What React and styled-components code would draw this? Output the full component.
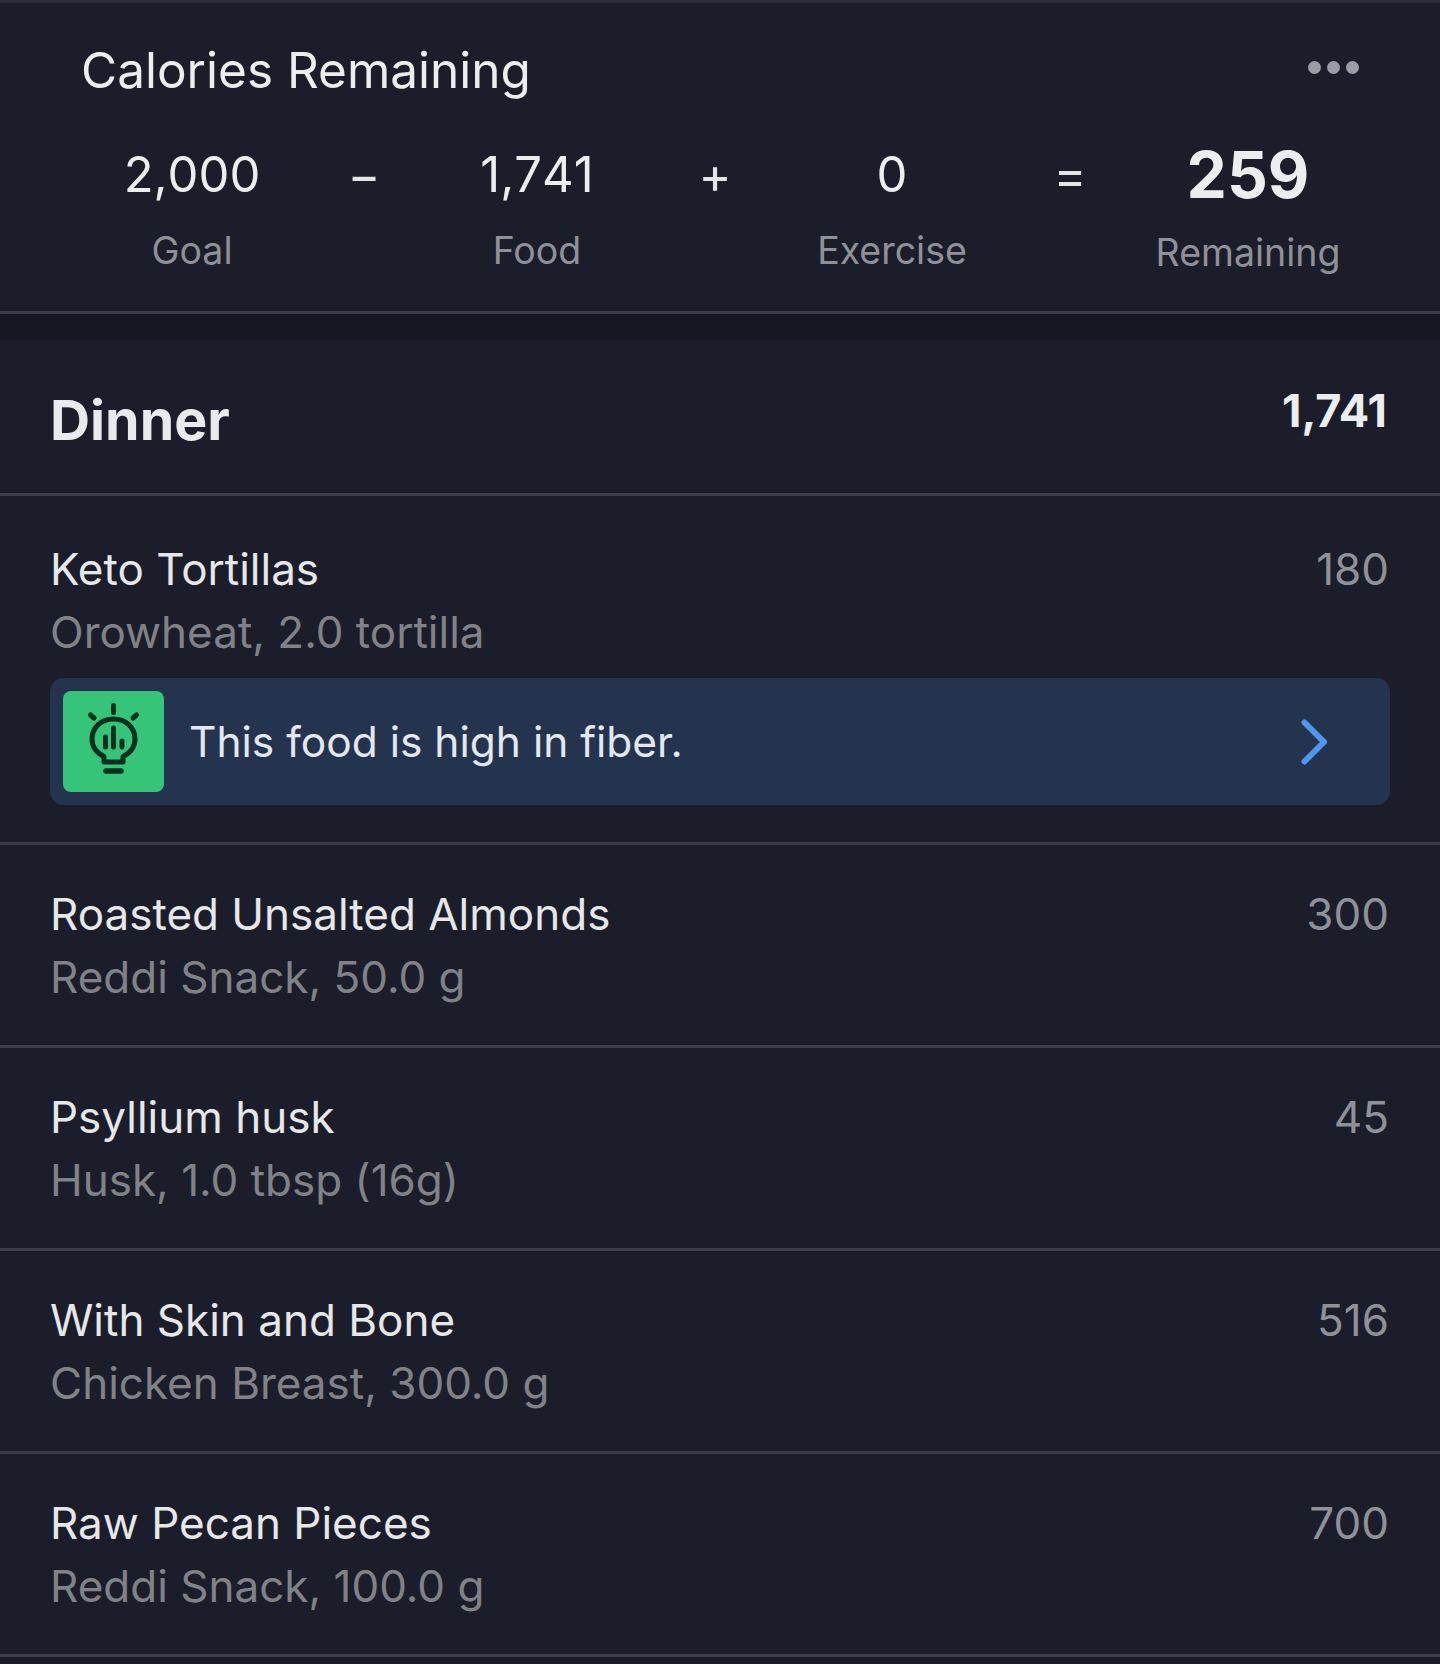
import React from "react";
import styled, { createGlobalStyle } from "styled-components";

const GlobalStyle = createGlobalStyle`
  html, body {
    margin: 0;
    padding: 0;
    background: #1b1e2a;
  }
  body {
    font-family: "Inter", "Liberation Sans", sans-serif;
  }
`;

const Page = styled.div`
  width: 1440px;
  height: 1664px;
  overflow: hidden;
  background: #1b1e2a;
  color: #e9eaec;
`;

const Summary = styled.section`
  height: 308px;
  border-top: 3px solid #2b2e3a;
  border-bottom: 3px solid #3a3d49;
`;

const SummaryHead = styled.div`
  display: flex;
  align-items: center;
  justify-content: space-between;
  padding: 22px 81px 0 81px;
  height: 92px;
  box-sizing: border-box;
`;

const SummaryTitle = styled.h2`
  margin: 0;
  font-size: 49.5px;
  line-height: 92px;
  font-weight: 400;
  color: #eceded;
  transform: translateY(10px);
`;

const Dots = styled.div`
  display: flex;
  gap: 6px;
  margin-top: 15px;
`;

const Dot = styled.span`
  width: 13px;
  height: 13px;
  border-radius: 50%;
  background: #9b9ca6;
`;

const Equation = styled.div`
  display: grid;
  grid-template-columns: 178px 166px 180px 176px 178px 178px 178px;
  padding: 45px 0 0 103px;
`;

const Stat = styled.div`
  display: flex;
  flex-direction: column;
  align-items: center;
`;

const StatValue = styled.div`
  height: 70px;
  line-height: 70px;
  white-space: nowrap;
  font-size: ${(p) => (p.$strong ? 64 : 49)}px;
  font-weight: ${(p) => (p.$strong ? 700 : 400)};
  font-kerning: none;
  color: #eceded;
`;

const StatLabel = styled.div`
  margin-top: ${(p) => (p.$strong ? 20 : 18)}px;
  line-height: 46px;
  white-space: nowrap;
  font-size: 37.5px;
  color: #8f9199;
`;

const Operator = styled.div`
  height: 70px;
  line-height: 70px;
  text-align: center;
  font-size: 50px;
  color: #e4e5e8;
`;

const Band = styled.div`
  height: 26px;
  background: #151823;
`;

const MealHead = styled.header`
  display: flex;
  align-items: flex-start;
  justify-content: space-between;
  height: 156px;
  padding: 42px 53px 0 50px;
  box-sizing: border-box;
  border-bottom: 3px solid #3a3d49;
`;

const MealName = styled.h1`
  margin: 0;
  font-size: 55.5px;
  line-height: 76px;
  font-weight: 700;
  color: #e9eaec;
`;

const MealTotal = styled.div`
  margin-top: -1px;
  font-size: 45px;
  line-height: 60px;
  font-weight: 700;
  color: #eceded;
`;

const FoodRow = styled.div`
  padding: ${(p) => (p.$first ? 42 : 38)}px 51px ${(p) => (p.$first ? 37 : 36)}px 50px;
  border-bottom: 3px solid #3a3d49;
`;

const FoodMain = styled.div`
  display: flex;
  justify-content: space-between;
`;

const FoodName = styled.div`
  font-size: 44px;
  line-height: 63px;
  color: #e6e7e9;
`;

const FoodCalories = styled.div`
  font-size: 44px;
  line-height: 63px;
  color: #8f9199;
`;

const FoodDetail = styled.div`
  font-size: 44px;
  line-height: 63px;
  color: #808288;
`;

const Tip = styled.div`
  display: flex;
  align-items: center;
  height: 127px;
  margin: 14px -1px 0 0;
  padding: 0 62px 0 13px;
  border-radius: 14px;
  background: #25344e;
`;

const TipBadge = styled.div`
  flex: none;
  width: 101px;
  height: 101px;
  border-radius: 8px;
  background: #35c478;
`;

const TipText = styled.div`
  flex: 1;
  margin-left: 25px;
  font-size: 42.5px;
  line-height: 60px;
  color: #e3e7ee;
`;

const BulbIcon = () => (
  <svg width="101" height="101" viewBox="0 0 101 101" fill="none" stroke="#07301f" strokeLinecap="round" strokeLinejoin="round">
    <g strokeWidth="5">
      <path d="M50.5 14.500v7M27.500 24l3.500 3M73.500 24l-3.500 3" />
      <path d="M41 71v-5.500C33 61.500 29 55.500 29 48c0-11.500 9.500-20 21.500-20S72 36.500 72 48c0 7.500-4 13.500-12 17.500V71z" />
      <path d="M50.500 37v19M42.500 46v10M59 50v6" />
    </g>
    <path d="M43 80h15" strokeWidth="5.500" />
  </svg>
);

const Chevron = () => (
  <svg width="28" height="46" viewBox="0 0 28 46" fill="none" stroke="#5096ec" strokeWidth="6" strokeLinecap="round" strokeLinejoin="round">
    <path d="M4.500 3.500l19.500 19.500-19.500 19.500" />
  </svg>
);

const foods = [
  { name: "Roasted Unsalted Almonds", detail: "Reddi Snack, 50.0 g", calories: 300 },
  { name: "Psyllium husk", detail: "Husk, 1.0 tbsp (16g)", calories: 45 },
  { name: "With Skin and Bone", detail: "Chicken Breast, 300.0 g", calories: 516 },
  { name: "Raw Pecan Pieces", detail: "Reddi Snack, 100.0 g", calories: 700 },
];

export default function App() {
  return (
    <Page>
      <GlobalStyle />
      <Summary>
        <SummaryHead>
          <SummaryTitle>Calories Remaining</SummaryTitle>
          <Dots>
            <Dot />
            <Dot />
            <Dot />
          </Dots>
        </SummaryHead>
        <Equation>
          <Stat>
            <StatValue>2,000</StatValue>
            <StatLabel>Goal</StatLabel>
          </Stat>
          <Operator>−</Operator>
          <Stat>
            <StatValue>1,741</StatValue>
            <StatLabel>Food</StatLabel>
          </Stat>
          <Operator>+</Operator>
          <Stat>
            <StatValue>0</StatValue>
            <StatLabel>Exercise</StatLabel>
          </Stat>
          <Operator>=</Operator>
          <Stat>
            <StatValue $strong>259</StatValue>
            <StatLabel $strong>Remaining</StatLabel>
          </Stat>
        </Equation>
      </Summary>
      <Band />
      <MealHead>
        <MealName>Dinner</MealName>
        <MealTotal>1,741</MealTotal>
      </MealHead>
      <FoodRow $first>
        <FoodMain>
          <FoodName>Keto Tortillas</FoodName>
          <FoodCalories>180</FoodCalories>
        </FoodMain>
        <FoodDetail>Orowheat, 2.0 tortilla</FoodDetail>
        <Tip>
          <TipBadge>
            <BulbIcon />
          </TipBadge>
          <TipText>This food is high in fiber.</TipText>
          <Chevron />
        </Tip>
      </FoodRow>
      {foods.map((food) => (
        <FoodRow key={food.name}>
          <FoodMain>
            <FoodName>{food.name}</FoodName>
            <FoodCalories>{food.calories}</FoodCalories>
          </FoodMain>
          <FoodDetail>{food.detail}</FoodDetail>
        </FoodRow>
      ))}
    </Page>
  );
}
